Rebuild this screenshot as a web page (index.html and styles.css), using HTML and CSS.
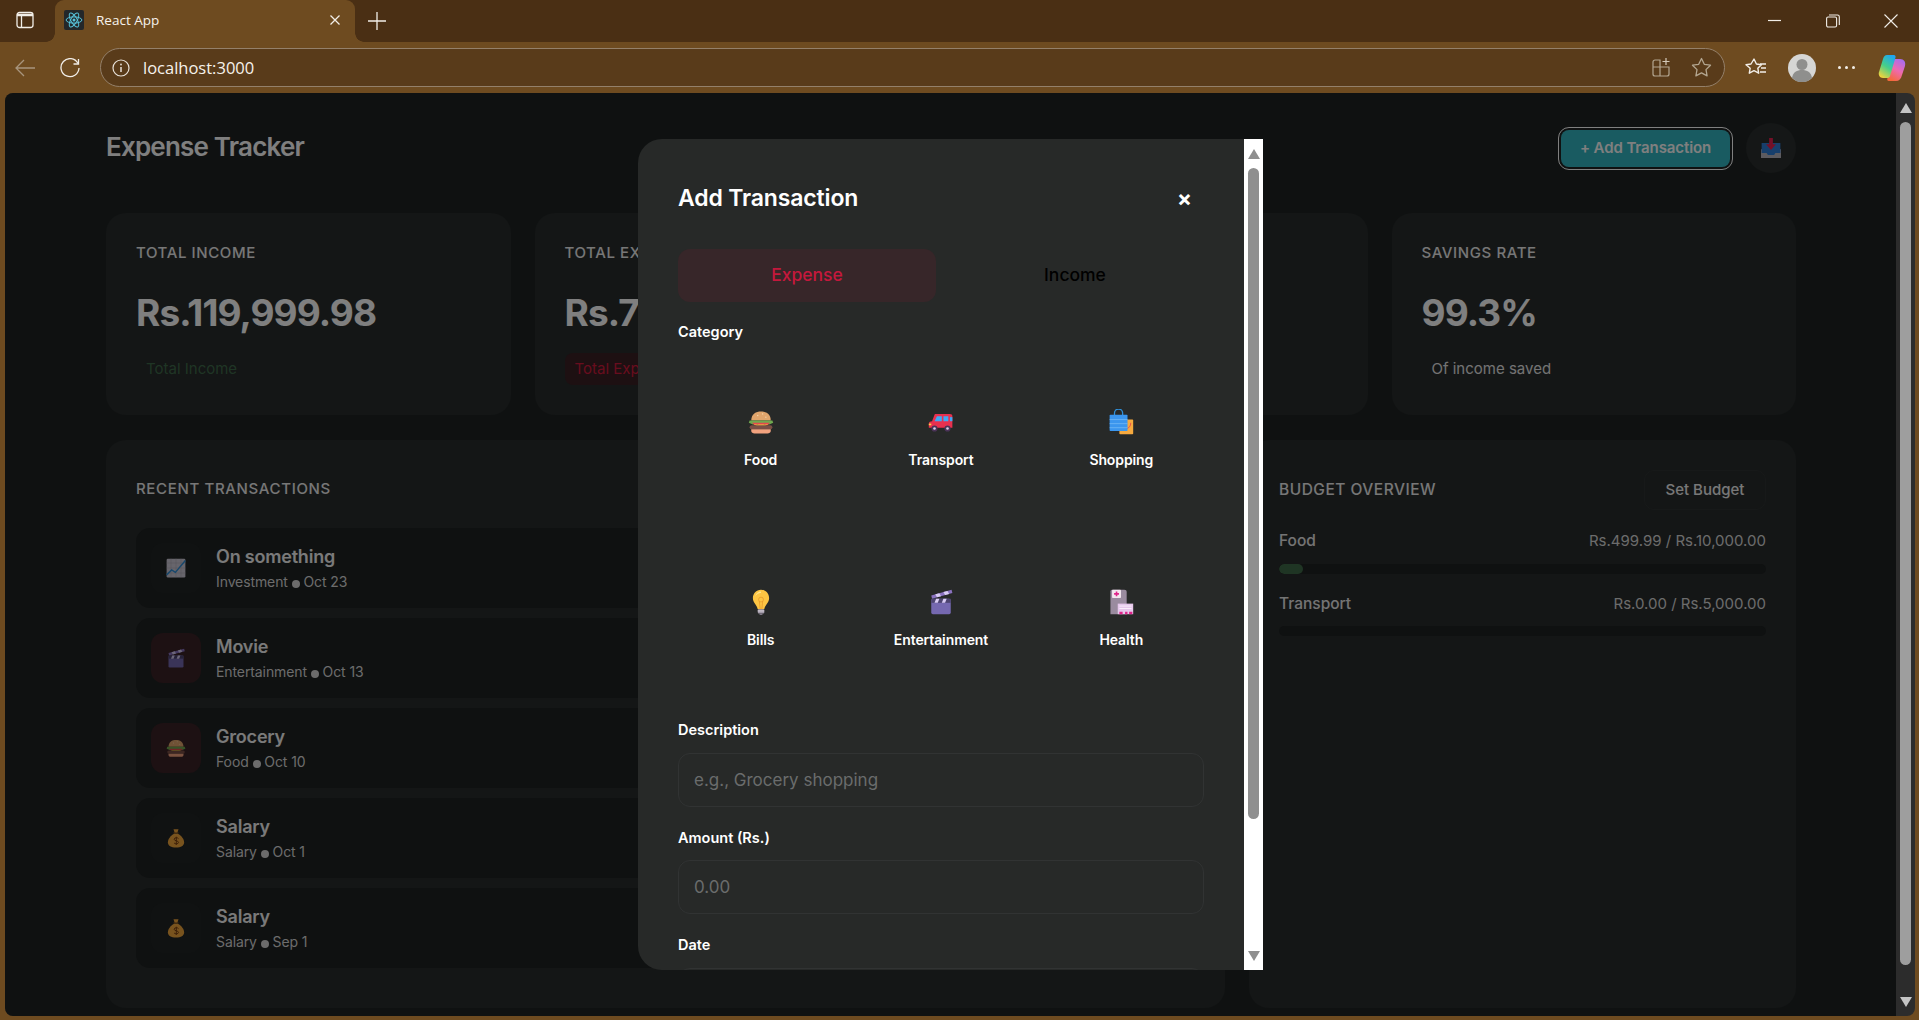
FILE: index.html
```html
<!DOCTYPE html>
<html lang="en">
<head>
  <meta charset="UTF-8">
  <title>React App</title>
  <link rel="stylesheet" href="styles.css">
</head>
<body>

  <!-- emoji drawn once, reused below -->
  <svg class="sprites" width="0" height="0">
    <symbol id="e-burger" viewBox="0 0 32 32">
      <path d="M4 14C4 6 10 3 16 3s12 3 12 11z" fill="#e0a56c"/>
      <path d="M2 14h28l1 3-5 2-5-1-5 2-5-2-5 1-5-2z" fill="#6fa84f"/>
      <path d="M5 17h22l-3 3-4-1-4 2-4-2-4 1z" fill="#e5484d"/>
      <path d="M7 19h18l-4 2h-10z" fill="#f7d23e"/>
      <rect x="2" y="20" width="28" height="5" rx="2.5" fill="#7a4f45"/>
      <path d="M4 25h24v2c0 2-2 3-4 3H8c-2 0-4-1-4-3z" fill="#f2a27e"/>
      <circle cx="12" cy="8" r=".8" fill="#f6d9b0"/><circle cx="18" cy="6" r=".8" fill="#f6d9b0"/><circle cx="22" cy="10" r=".8" fill="#f6d9b0"/>
    </symbol>
    <symbol id="e-car" viewBox="0 0 32 32">
      <path d="M10 6h17c2 0 3 1 3 3v14H1v-5c0-2 2-3 4-3l3-8c.5-1 1-1 2-1z" fill="#e8304f"/>
      <path d="M11 9h6v6H8zM19 9h6v6h-6z" fill="#3fa9f5"/>
      <rect x="27" y="10" width="3" height="5" fill="#3fa9f5"/>
      <rect x="1" y="18" width="3" height="2" fill="#ffd23f"/>
      <circle cx="8" cy="24" r="3.8" fill="#4b3358"/><circle cx="8" cy="24" r="1.6" fill="#d9cfe6"/>
      <circle cx="24" cy="24" r="3.8" fill="#4b3358"/><circle cx="24" cy="24" r="1.6" fill="#d9cfe6"/>
    </symbol>
    <symbol id="e-bags" viewBox="0 0 32 32">
      <rect x="14" y="13" width="17" height="18" rx="1" fill="#f5a93f"/>
      <path d="M22 24c4 0 6-3 6-7" fill="none" stroke="#e8504f" stroke-width="1.2"/>
      <path d="M8 9V5a5 5 0 0 1 10 0v4" fill="none" stroke="#2f8fd8" stroke-width="1.6"/>
      <rect x="2" y="7" width="22" height="20" rx="1" fill="#3b96ee"/>
      <path d="M2 13h22M2 18h22M2 23h22" stroke="#70b8f5" stroke-width="1"/>
    </symbol>
    <symbol id="e-bulb" viewBox="0 0 32 32">
      <path d="M16 1C10 1 6 6 6 11c0 6 5 8 6 14h8c1-6 6-8 6-14 0-5-4-10-10-10z" fill="#fdc543"/>
      <path d="M16 3c-4 0-7 3-7 7 0-2 3-5 7-5z" fill="#ffe58c"/>
      <circle cx="16" cy="13" r="3" fill="none" stroke="#e89a2b" stroke-width="1"/>
      <path d="M14 15l1 10M18 15l-1 10" stroke="#e89a2b" stroke-width="1"/>
      <rect x="12" y="25" width="8" height="5" rx="1.5" fill="#a29aa8"/>
      <path d="M12 27h8" stroke="#e4dfe8" stroke-width="1"/>
      <rect x="14" y="30" width="4" height="2" rx="1" fill="#7d7584"/>
    </symbol>
    <symbol id="e-clapper" viewBox="0 0 32 32">
      <path d="M4 8L29 1l1 4L5 12z" fill="#8a72c0"/>
      <path d="M9 6.6l5-1.4 2 3.6-5 1.4zM19 3.8l5-1.4 2 3.6-5 1.4z" fill="#d9ccf4"/>
      <rect x="4" y="12" width="24" height="19" rx="2" fill="#7568b0"/>
      <rect x="4" y="12" width="24" height="5" fill="#4d4470"/>
      <path d="M8 17l2-5h4l-2 5zM17 17l2-5h4l-2 5z" fill="#d9ccf4"/>
    </symbol>
    <symbol id="e-health" viewBox="0 0 32 32">
      <path d="M3 3c0-1 1-2 2-2h15c2 0 3 1 3 3v27H3z" fill="#9a8b9f"/>
      <rect x="5" y="1" width="11" height="10" rx="1" fill="#f3e7ef"/>
      <path d="M10.500 3v6M7.500 6h6" stroke="#e0248a" stroke-width="2"/>
      <rect x="12" y="18" width="19" height="13" fill="#e6c8ec"/>
      <path d="M14 21h15M14 24h15" stroke="#fbeefc" stroke-width="1.200"/>
      <path d="M14 28h4v3h-4zM21 28h3v3h-3zM26 28h4v3h-4z" fill="#e0248a"/>
    </symbol>
    <symbol id="e-chart" viewBox="0 0 32 32">
      <rect x="1" y="1" width="30" height="30" rx="2" fill="#cfcbd8"/>
      <path d="M1 8h30M1 16h30M1 24h30M8 1v30M16 1v30M24 1v30" stroke="#aaa6b6" stroke-width=".8"/>
      <path d="M1 27l8-8 6 4L31 4" fill="none" stroke="#2f8fd8" stroke-width="2.400"/>
    </symbol>
    <symbol id="e-money" viewBox="0 0 32 32">
      <path d="M12 2h8l-2 6h-4z" fill="#f0a63c"/>
      <rect x="12" y="7" width="8" height="2" fill="#8c5a1e"/>
      <path d="M13 9h6c6 3 10 9 10 14 0 5-5 8-13 8S3 28 3 23c0-5 4-11 10-14z" fill="#f0a63c"/>
      <path d="M20 17c-1-2-7-2-7 1 0 3 7 2 7 5 0 3-6 3-7 1M16.500 14v13" fill="none" stroke="#7a3f10" stroke-width="1.600"/>
    </symbol>
    <symbol id="e-inbox" viewBox="0 0 32 32">
      <path d="M0 18h32v14H0z" fill="#b9b6c0"/>
      <path d="M1 8h30v16h-8l-2 3H11l-2-3H1z" fill="#2f7fd8"/>
      <path d="M13 0h6v10h5l-8 9-8-9h5z" fill="#e8204f"/>
    </symbol>
  </svg>

  <header class="tabstrip">
    <button class="strip-btn sidebar-btn">
      <svg width="20" height="20" viewBox="0 0 20 20" fill="none" stroke="#f2eee8" stroke-width="1.300"><rect x="2" y="2.500" width="16" height="15" rx="2.500"/><path d="M2 5h16" stroke-width="2.500"/><path d="M6.500 5v12.500"/></svg>
    </button>
    <div class="tab">
      <span class="favicon">
        <svg width="18" height="18" viewBox="0 0 24 24" fill="none" stroke="#58c4dc" stroke-width="1.300"><circle cx="12" cy="12" r="2" fill="#58c4dc" stroke="none"/><ellipse cx="12" cy="12" rx="10.500" ry="4.200"/><ellipse cx="12" cy="12" rx="10.500" ry="4.200" transform="rotate(60 12 12)"/><ellipse cx="12" cy="12" rx="10.500" ry="4.200" transform="rotate(120 12 12)"/></svg>
      </span>
      <span class="tab-title">React App</span>
      <svg class="tab-close" width="12" height="12" viewBox="0 0 12 12" stroke="#f2eee8" stroke-width="1.300"><path d="M1.500 1.500l9 9M10.500 1.500l-9 9"/></svg>
    </div>
    <svg class="new-tab" width="18" height="18" viewBox="0 0 18 18" stroke="#f2eee8" stroke-width="1.300"><path d="M9 0v18M0 9h18"/></svg>
    <div class="window-btns">
      <svg width="14" height="14" viewBox="0 0 14 14" stroke="#f2eee8" stroke-width="1.200"><path d="M0 6.500h13"/></svg>
      <svg width="14" height="14" viewBox="0 0 14 14" fill="none" stroke="#f2eee8" stroke-width="1.100"><rect x=".6" y="3" width="10" height="10" rx="1.500"/><path d="M3 1h8.500c1 0 1.800.8 1.800 1.800V11"/></svg>
      <svg width="14" height="14" viewBox="0 0 14 14" stroke="#f2eee8" stroke-width="1.100"><path d="M.5.500l13 13M13.500.500l-13 13"/></svg>
    </div>
  </header>

  <nav class="toolbar">
    <svg class="tool-back" width="20" height="20" viewBox="0 0 20 20" fill="none" stroke="#a8957d" stroke-width="1.300"><path d="M20 10H1M9 2l-8 8 8 8"/></svg>
    <svg class="tool-reload" width="20" height="20" viewBox="0 0 20 20" fill="none" stroke="#f2eee8" stroke-width="1.300"><path d="M18 5.500A9 9 0 1 0 19 10"/><path d="M18.500 1v5h-5"/></svg>
    <div class="addressbar">
      <svg width="18" height="18" viewBox="0 0 18 18" fill="none" stroke="#e8e2da" stroke-width="1.200"><circle cx="9" cy="9" r="8"/><path d="M9 8v5" stroke-width="1.500"/><circle cx="9" cy="5.500" r=".9" fill="#e8e2da" stroke="none"/></svg>
      <span class="url">localhost:3000</span>
      <span class="address-end">
        <svg width="19" height="19" viewBox="0 0 19 19" fill="none" stroke="#b3a690" stroke-width="1.200"><path d="M8 2H3a2 2 0 0 0-2 2v12a2 2 0 0 0 2 2h12a2 2 0 0 0 2-2V9H8zM8 9H1M8 9v9"/><path d="M14 0v7M10.500 3.500h7" stroke="#d4c9b8"/></svg>
        <svg width="21" height="21" viewBox="0 0 21 21" fill="none" stroke="#b3a690" stroke-width="1.300"><path d="M10.500 1.500l2.800 5.800 6.200.9-4.500 4.400 1.100 6.300-5.600-3-5.600 3 1.100-6.300L1.500 8.200l6.200-.9z" stroke-linejoin="round"/></svg>
      </span>
    </div>
    <svg class="tool-favs" width="22" height="22" viewBox="0 0 22 22" fill="none" stroke="#f2eee8" stroke-width="1.400"><path d="M9 2l2.400 5 5 .7-3.600 3.500.9 5-4.700-2.500-4.700 2.500.9-5L1 7.700l5-.7z" stroke-linejoin="round"/><path d="M15 7h6M16 11h5M15 15h6"/></svg>
    <span class="profile">
      <svg width="28" height="28" viewBox="0 0 28 28"><circle cx="14" cy="14" r="14" fill="#d6d6d4"/><circle cx="14" cy="10.500" r="5.500" fill="#8f8f8d"/><path d="M4 24c1-6 5-8 10-8s9 2 10 8a14 14 0 0 1-20 0z" fill="#8f8f8d"/></svg>
    </span>
    <span class="dots"><i></i><i></i><i></i></span>
    <svg class="copilot" width="28" height="28" viewBox="0 0 28 28">
      <defs>
        <linearGradient id="copA" x1=".7" y1="0" x2=".2" y2="1"><stop offset="0" stop-color="#1fa6f0"/><stop offset=".5" stop-color="#45cf8a"/><stop offset="1" stop-color="#f5d33a"/></linearGradient>
        <linearGradient id="copB" x1=".8" y1="0" x2=".3" y2="1"><stop offset="0" stop-color="#a56cf0"/><stop offset=".5" stop-color="#ee6ab0"/><stop offset="1" stop-color="#f5693a"/></linearGradient>
      </defs>
      <path d="M17 5h5c4 0 6 3 5 7l-3 9c-1 4-3 6-6 6h-7c-2 0-2-2-1.500-3L15 7c.3-1 1-2 2-2z" fill="url(#copB)"/>
      <path d="M9 1h7c1 0 2 1 1.500 2.500L12 22c-.5 1.500-1.500 2-3 2H5c-3 0-5-3-4-6L5 5c1-3 2-4 4-4z" fill="url(#copA)"/>
    </svg>
  </nav>

  <div class="frame">
    <div class="page">
      <main class="content">
        <div class="topbar">
          <h1 class="app-title">Expense Tracker</h1>
          <div class="topbar-actions">
            <button class="add-btn">+ Add Transaction</button>
            <button class="round-btn"><svg class="emoji" width="20" height="20"><use href="#e-inbox"/></svg></button>
          </div>
        </div>

        <section class="stats">
          <div class="card">
            <div class="card-label">TOTAL INCOME</div>
            <div class="card-value">Rs.119,999.98</div>
            <span class="pill pill-green">Total Income</span>
          </div>
          <div class="card">
            <div class="card-label">TOTAL EXPENSES</div>
            <div class="card-value">Rs.799.98</div>
            <span class="pill pill-red">Total Expenses</span>
          </div>
          <div class="card"></div>
          <div class="card">
            <div class="card-label">SAVINGS RATE</div>
            <div class="card-value">99.3%</div>
            <span class="pill">Of income saved</span>
          </div>
        </section>

        <section class="panels">
          <div class="panel">
            <h2 class="panel-title panel-title-tx">RECENT TRANSACTIONS</h2>
            <div class="tx-list">
              <div class="tx">
                <span class="tx-icon"><svg class="emoji" width="20" height="20"><use href="#e-chart"/></svg></span>
                <div class="tx-text"><div class="tx-name">On something</div><div class="tx-meta">Investment <i class="dot"></i> Oct 23</div></div>
              </div>
              <div class="tx">
                <span class="tx-icon tx-icon-red"><svg class="emoji" width="20" height="20"><use href="#e-clapper"/></svg></span>
                <div class="tx-text"><div class="tx-name">Movie</div><div class="tx-meta">Entertainment <i class="dot"></i> Oct 13</div></div>
              </div>
              <div class="tx">
                <span class="tx-icon tx-icon-red"><svg class="emoji" width="20" height="20"><use href="#e-burger"/></svg></span>
                <div class="tx-text"><div class="tx-name">Grocery</div><div class="tx-meta">Food <i class="dot"></i> Oct 10</div></div>
              </div>
              <div class="tx">
                <span class="tx-icon"><svg class="emoji" width="20" height="20"><use href="#e-money"/></svg></span>
                <div class="tx-text"><div class="tx-name">Salary</div><div class="tx-meta">Salary <i class="dot"></i> Oct 1</div></div>
              </div>
              <div class="tx">
                <span class="tx-icon"><svg class="emoji" width="20" height="20"><use href="#e-money"/></svg></span>
                <div class="tx-text"><div class="tx-name">Salary</div><div class="tx-meta">Salary <i class="dot"></i> Sep 1</div></div>
              </div>
            </div>
          </div>

          <div class="panel">
            <div class="budget-head">
              <h2 class="panel-title">BUDGET OVERVIEW</h2>
              <button class="budget-btn">Set Budget</button>
            </div>
            <div class="budget-row"><span>Food</span><span class="budget-amount">Rs.499.99 / Rs.10,000.00</span></div>
            <div class="bar"><div class="bar-fill" style="width: 5%"></div></div>
            <div class="budget-row"><span>Transport</span><span class="budget-amount">Rs.0.00 / Rs.5,000.00</span></div>
            <div class="bar"></div>
          </div>
        </section>

        <div class="overlay">
          <div class="modal">
            <div class="modal-body">
              <div class="modal-head">
                <h2 class="modal-title">Add Transaction</h2>
                <span class="modal-close">×</span>
              </div>
              <div class="type-tabs">
                <button class="type-tab type-tab-active">Expense</button>
                <button class="type-tab">Income</button>
              </div>
              <label class="field-label">Category</label>
              <div class="cat-grid">
                <div class="cat"><svg class="cat-emoji" width="26" height="26"><use href="#e-burger"/></svg><span>Food</span></div>
                <div class="cat"><svg class="cat-emoji" width="26" height="26"><use href="#e-car"/></svg><span>Transport</span></div>
                <div class="cat"><svg class="cat-emoji" width="26" height="26"><use href="#e-bags"/></svg><span>Shopping</span></div>
                <div class="cat"><svg class="cat-emoji" width="26" height="26"><use href="#e-bulb"/></svg><span>Bills</span></div>
                <div class="cat"><svg class="cat-emoji" width="26" height="26"><use href="#e-clapper"/></svg><span>Entertainment</span></div>
                <div class="cat"><svg class="cat-emoji" width="26" height="26"><use href="#e-health"/></svg><span>Health</span></div>
              </div>
              <div class="form-group form-first">
                <label class="field-label">Description</label>
                <input class="field" type="text" placeholder="e.g., Grocery shopping">
              </div>
              <div class="form-group">
                <label class="field-label">Amount (Rs.)</label>
                <input class="field" type="text" placeholder="0.00">
              </div>
              <div class="form-group">
                <label class="field-label">Date</label>
                <input class="field" type="text">
              </div>
            </div>
            <div class="modal-scroll">
              <i class="arrow-up"></i>
              <div class="modal-thumb"></div>
              <i class="arrow-down"></i>
            </div>
          </div>
        </div>
      </main>

      <div class="page-scroll">
        <i class="arrow-up"></i>
        <div class="page-thumb"></div>
        <i class="arrow-down"></i>
      </div>
    </div>
  </div>

</body>
</html>
```

FILE: styles.css
```css
* {
  box-sizing: border-box;
}
html, body {
  height: 100%;
}
body {
  margin: 0;
  display: flex;
  flex-direction: column;
  overflow: hidden;
  background-color: #6e4b20;
  font-family: Inter, "Liberation Sans", sans-serif;
  color: #fff;
}
button {
  font-family: inherit;
  cursor: pointer;
}
h1, h2 {
  margin: 0;
}
.sprites {
  position: absolute;
}

/* browser chrome */
.tabstrip {
  height: 42px;
  flex: none;
  display: flex;
  align-items: center;
  background-color: #4a2f14;
}
.strip-btn {
  width: 55px;
  height: 42px;
  padding: 0 0 2px 0;
  border: none;
  background: none;
  display: flex;
  align-items: center;
  justify-content: center;
}
.sidebar-btn svg {
  margin-left: -5px;
}
.tab {
  position: relative;
  width: 300px;
  height: 42px;
  padding: 0 14px 2px 9px;
  display: flex;
  align-items: center;
  background-color: #6e4b20;
  border-radius: 9px 9px 0 0;
}
.tab::before, .tab::after {
  content: "";
  position: absolute;
  bottom: 0;
  width: 9px;
  height: 9px;
}
.tab::before {
  left: -9px;
  background: radial-gradient(circle at 0 0, #4a2f14 8.500px, #6e4b20 9px);
}
.tab::after {
  right: -9px;
  background: radial-gradient(circle at 100% 0, #4a2f14 8.500px, #6e4b20 9px);
}
.favicon {
  width: 20px;
  height: 20px;
  display: flex;
  align-items: center;
  justify-content: center;
  background-color: #23272a;
  border-radius: 2px;
}
.tab-title {
  flex: 1;
  margin-left: 12px;
  font-family: "Open Sans", sans-serif;
  font-size: 13.500px;
  color: #f6f2ec;
}
.new-tab {
  margin-left: 13px;
}
.window-btns {
  margin-left: auto;
  padding-right: 21px;
  display: flex;
  gap: 44px;
}
.window-btns svg:first-child {
  margin-left: 2px;
}
.toolbar {
  height: 51px;
  flex: none;
  padding: 0 13px 0 15px;
  display: flex;
  align-items: center;
}
.tool-reload {
  margin-left: 25px;
}
.addressbar {
  width: 1625px;
  height: 39px;
  margin-left: 20px;
  padding: 0 12px 0 11px;
  display: flex;
  align-items: center;
  background-color: #593b1a;
  border: 1px solid #94806a;
  border-radius: 20px;
}
.url {
  margin-left: 13px;
  font-family: "Open Sans", sans-serif;
  font-size: 16.500px;
  color: #f6f2ec;
}
.address-end {
  margin-left: auto;
  display: flex;
  align-items: center;
  gap: 20px;
}
.tool-favs {
  margin-left: 20px;
}
.profile {
  height: 28px;
  margin-left: 21px;
}
.dots {
  margin-left: 22px;
  display: flex;
  gap: 4px;
}
.dots i {
  width: 3px;
  height: 3px;
  border-radius: 50%;
  background-color: #f2eee8;
}
.copilot {
  margin-left: 23px;
}

/* page */
.frame {
  flex: 1;
  min-height: 0;
  padding: 0 4px 4px 5px;
}
.page {
  height: 100%;
  display: flex;
  overflow: hidden;
  border-radius: 8px 8px 8px 8px;
}
.content {
  position: relative;
  flex: 1;
  min-width: 0;
  padding: 30px 100px 0 101px;
  overflow: hidden;
  background-color: #1f2323;
}
.topbar {
  height: 50px;
  margin-bottom: 40px;
  display: flex;
  align-items: center;
  justify-content: space-between;
}
.app-title {
  margin-top: -4px;
  font-size: 26px;
  font-weight: 600;
  letter-spacing: -0.8px;
}
.topbar-actions {
  display: flex;
  align-items: center;
  gap: 16px;
}
.add-btn {
  width: 169px;
  height: 37px;
  padding: 0 0 2px;
  border: none;
  border-radius: 8px;
  background-color: #33b6c2;
  color: #fff;
  font-size: 15px;
  font-weight: 600;
  letter-spacing: -0.1px;
  outline: 1.500px solid #fff;
  outline-offset: 2px;
}
.round-btn {
  width: 50px;
  height: 50px;
  padding: 0;
  display: flex;
  align-items: center;
  justify-content: center;
  border: none;
  border-radius: 50%;
  background-color: #2a2e2e;
}
.emoji {
  display: block;
}
.stats {
  display: grid;
  grid-template-columns: repeat(4, 1fr);
  gap: 24px;
  margin-bottom: 25px;
}
.card {
  height: 202px;
  padding: 30px;
  background-color: #282c2c;
  border-radius: 20px;
}
.card-label {
  height: 20px;
  line-height: 20px;
  font-size: 15px;
  font-weight: 500;
  letter-spacing: 0.6px;
  color: #eee;
}
.card-value {
  height: 48px;
  margin-top: 26px;
  line-height: 48px;
  font-size: 37px;
  font-weight: 700;
  letter-spacing: -0.9px;
}
.pill {
  display: inline-block;
  height: 32px;
  margin-top: 16px;
  padding: 0 10px;
  line-height: 32px;
  font-size: 15px;
  color: #e6e6e6;
  border-radius: 8px;
}
.pill-green {
  color: #3f6b4a;
}
.pill-red {
  color: #d01a3c;
  background-color: #3a2024;
}
.panels {
  display: grid;
  grid-template-columns: 1119px 1fr;
  gap: 24px;
}
.panel {
  height: 568px;
  padding: 30px;
  background-color: #282c2c;
  border-radius: 20px;
}
.panel-title {
  height: 36px;
  line-height: 36px;
  font-size: 15.500px;
  font-weight: 500;
  letter-spacing: 0.5px;
  color: #eee;
}
.panel-title-tx {
  padding-top: 1px;
  font-size: 15px;
  letter-spacing: 0.65px;
}
.tx-list {
  margin-top: 22px;
  display: flex;
  flex-direction: column;
  gap: 10px;
}
.tx {
  height: 80px;
  padding: 15px;
  display: flex;
  align-items: center;
  gap: 15px;
  background-color: #1e2222;
  border-radius: 14px;
}
.tx-icon {
  width: 50px;
  height: 50px;
  flex: none;
  display: flex;
  align-items: center;
  justify-content: center;
  background-color: #212525;
  border-radius: 12px;
}
.tx-icon-red {
  background-color: #3a2226;
}
.tx-text {
  padding-top: 1px;
}
.tx-name {
  font-size: 18px;
  font-weight: 600;
  line-height: 24px;
  margin-bottom: 3px;
  letter-spacing: -0.2px;
  color: #f4f4f4;
}
.tx-meta {
  font-size: 14px;
  line-height: 20px;
  letter-spacing: -0.1px;
  color: #d8d8d8;
}
.dot {
  display: inline-block;
  width: 8px;
  height: 8px;
  vertical-align: -0.5px;
  border-radius: 50%;
  background-color: #d8d8d8;
}
.budget-head {
  height: 40px;
  display: flex;
  align-items: center;
  justify-content: space-between;
}
.budget-btn {
  width: 122px;
  height: 40px;
  padding: 0 0 1px;
  border: 1px solid #2f3333;
  border-radius: 10px;
  background: none;
  color: #f0f0f0;
  font-size: 15px;
  font-weight: 500;
}
.budget-row {
  margin-top: 21px;
  height: 20px;
  line-height: 20px;
  display: flex;
  justify-content: space-between;
  font-size: 15.500px;
  font-weight: 500;
  color: #e8e8e8;
}
.budget-row + .bar + .budget-row {
  margin-top: 20px;
}
.budget-amount {
  font-size: 15px;
  font-weight: 400;
  color: #d8d8d8;
}
.bar {
  height: 10px;
  margin-top: 13px;
  background-color: #1e2222;
  border-radius: 5px;
  overflow: hidden;
}
.budget-row + .bar + .budget-row + .bar {
  margin-top: 12px;
}
.bar-fill {
  height: 100%;
  background-color: #3f6a48;
  border-radius: 5px;
}

/* modal */
.overlay {
  position: absolute;
  inset: 0;
  display: flex;
  align-items: center;
  justify-content: center;
  background-color: rgba(0, 0, 0, 0.5);
}
.modal {
  width: 625px;
  height: 90%;
  display: flex;
  overflow: hidden;
  background-color: #272928;
  border-radius: 24px 0 0 24px;
}
.modal-body {
  flex: 1;
  min-width: 0;
  padding: 40px 40px 0;
  overflow: hidden;
}
.modal-head {
  height: 38px;
  margin-bottom: 32px;
  display: flex;
  align-items: center;
  justify-content: space-between;
}
.modal-title {
  font-size: 23px;
  font-weight: 600;
  letter-spacing: -0.15px;
}
.modal-close {
  margin-right: 12px;
  font-size: 22px;
  font-weight: 700;
  line-height: 24px;
}
.type-tabs {
  display: flex;
  gap: 10px;
  margin-bottom: 20px;
}
.type-tab {
  flex: 1;
  height: 53px;
  padding: 0 0 2px;
  border: none;
  border-radius: 12px;
  background: none;
  color: #000;
  font-size: 17.500px;
  font-weight: 500;
}
.type-tab-active {
  background-color: #372629;
  color: #c4183c;
}
.field-label {
  display: block;
  height: 20px;
  line-height: 20px;
  font-size: 14.500px;
  font-weight: 600;
}
.cat-grid {
  margin-top: 16px;
  display: grid;
  grid-template-columns: repeat(3, 1fr);
  gap: 15px;
}
.cat {
  height: 165px;
  padding-bottom: 5px;
  display: flex;
  flex-direction: column;
  align-items: center;
  justify-content: center;
  gap: 16px;
  font-size: 14px;
  font-weight: 600;
  letter-spacing: -0.1px;
}
.form-group {
  margin-top: 21px;
}
.form-first {
  margin-top: 17px;
}
.form-group .field-label {
  margin-bottom: 12.500px;
}
.field {
  display: block;
  width: 100%;
  height: 54px;
  padding: 0 15px;
  border: 1px solid #313333;
  border-radius: 12px;
  background-color: #272928;
  color: #fff;
  font-family: inherit;
  font-size: 17px;
}
.field::placeholder {
  color: #6a6c6c;
}
.modal-scroll, .page-scroll {
  width: 19px;
  flex: none;
  display: flex;
  flex-direction: column;
  align-items: center;
}
.modal-scroll {
  background-color: #fff;
}
.page-scroll {
  background-color: #2c2c2c;
}
.arrow-up, .arrow-down {
  width: 0;
  height: 0;
  flex: none;
  border-left: 6px solid transparent;
  border-right: 6px solid transparent;
}
.arrow-up {
  margin-top: 10px;
  border-bottom: 10px solid #8f8f8f;
}
.arrow-down {
  margin-top: auto;
  margin-bottom: 9px;
  border-top: 10px solid #8f8f8f;
}
.page-scroll .arrow-up {
  border-bottom-color: #c4c4c4;
}
.page-scroll .arrow-down {
  border-top-color: #c4c4c4;
}
.modal-thumb, .page-thumb {
  width: 11px;
  margin-top: 9px;
  border-radius: 6px;
  flex: none;
}
.modal-thumb {
  height: 651px;
  background-color: #8f8f8f;
}
.page-thumb {
  height: 843px;
  background-color: #9e9e9e;
}
```
